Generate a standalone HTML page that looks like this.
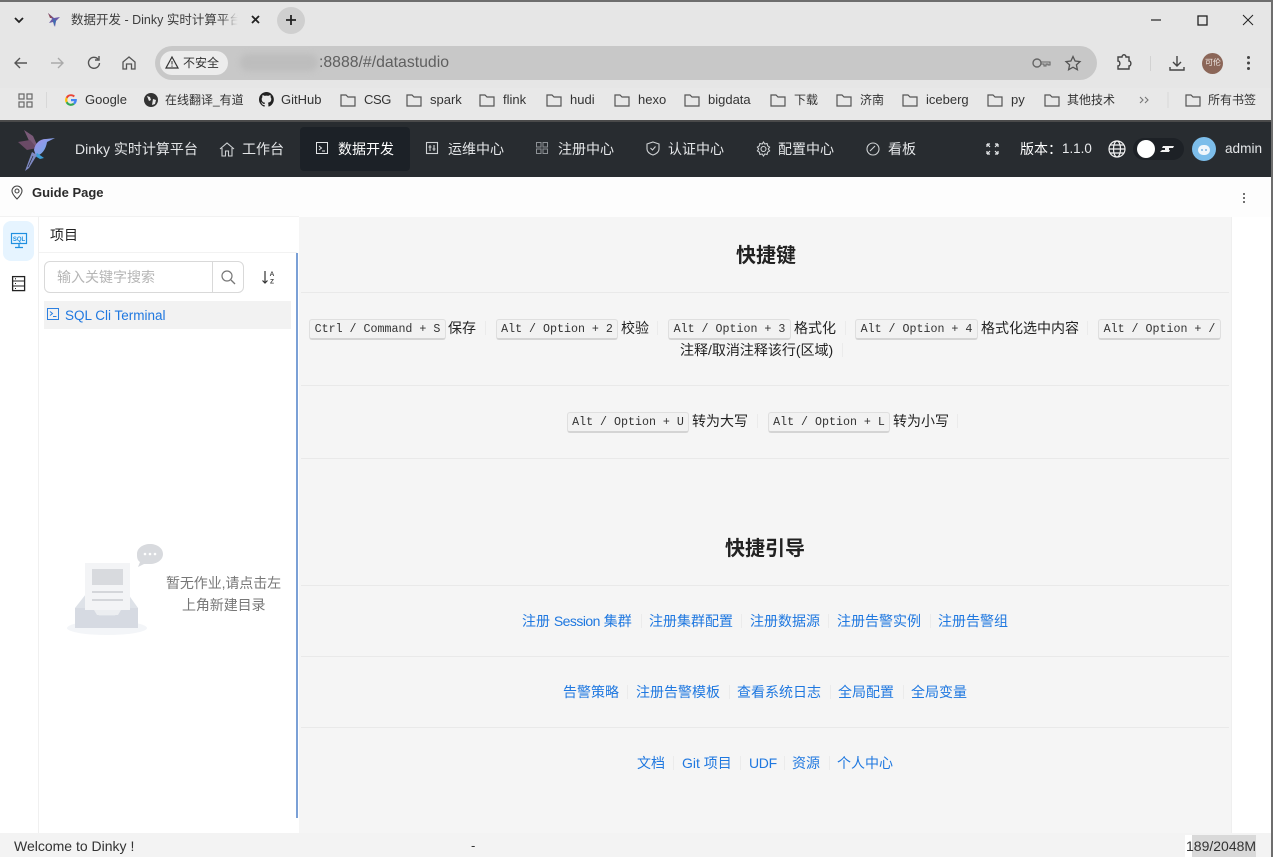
<!DOCTYPE html>
<html><head><meta charset="utf-8"><style>
html,body{margin:0;padding:0;width:1273px;height:857px;overflow:hidden;background:#fff;font-family:"Liberation Sans","Noto Sans CJK SC",sans-serif}
.a{position:absolute}
.t{position:absolute;white-space:nowrap;line-height:20px;height:20px;font-size:13px;color:#333}
.n{font-size:14px;color:#e4e6e8}
.l{font-size:14px;color:#1f78e0}
.k{position:absolute;height:18px;background:#f2f2f2;border:1px solid #dfdfdf;border-bottom:2px solid #d4d4d4;border-radius:3px;font:11.65px/20px "Liberation Mono",monospace;color:#333;text-align:center;white-space:nowrap;box-sizing:content-box;overflow:hidden}
.z{font-size:14px;color:#222}
.d{position:absolute;height:1px;background:#e9e9e9;left:301px;width:928px}
.s{position:absolute;width:1px;height:14px;background:#ebebeb}
svg{position:absolute;overflow:visible}
.f{fill:none;stroke:#555;stroke-width:1.2}
.w{fill:none;stroke:#cfd2d4;stroke-width:1.1}
</style></head><body>
<!-- chrome -->
<div class="a" style="left:0;top:0;width:1273px;height:121px;background:#e6e6e6"></div>
<div class="a" style="left:0;top:0;width:1273px;height:2px;background:#6e6e6e"></div>
<div class="a" style="left:0;top:88px;width:1273px;height:33px;background:#e8e8e8"></div>
<svg style="left:14px;top:17px" width="10" height="7"><path d="M1 1l4 4 4-4" fill="none" stroke="#222" stroke-width="1.8"/></svg>
<svg style="left:46px;top:12px" width="16" height="16"><path d="M2 1l6 5 6-1-4 4-1 6-2-5-4 1 3-4z" fill="#6a5aa8"/><path d="M7 6l3 3-2 5z" fill="#3a6fb0"/><path d="M2 1l5 5-3 0z" fill="#8a4a5a"/></svg>
<span class="t" style="left:71px;top:10px;font-size:12.5px;color:#3c3c3c;width:167px;overflow:hidden;-webkit-mask-image:linear-gradient(90deg,#000 150px,transparent 167px)">数据开发 - Dinky 实时计算平台</span>
<svg style="left:251px;top:15px" width="10" height="10"><path d="M1 1l7 7M8 1L1 8" stroke="#222" stroke-width="1.8"/></svg>
<div class="a" style="left:277px;top:7px;width:28px;height:27px;border-radius:50%;background:#cfcfcf"></div>
<svg style="left:285px;top:14px" width="12" height="12"><path d="M6 1v10M1 6h10" stroke="#222" stroke-width="1.8"/></svg>
<svg style="left:1151px;top:15px" width="106" height="12"><path d="M0 5h10" stroke="#222" stroke-width="1.2"/><rect x="47" y="1" width="9" height="9" fill="none" stroke="#222" stroke-width="1.3"/><path d="M92 0l10 10M102 0L92 10" stroke="#222" stroke-width="1"/></svg>
<!-- nav buttons -->
<svg style="left:14px;top:55px" width="125" height="16"><path d="M1 8h12M6 3L1 8l5 5" fill="none" stroke="#555" stroke-width="1.4"/><path d="M37 8h12M44 3l5 5-5 5" fill="none" stroke="#aaa" stroke-width="1.4"/><path d="M84 4a5.5 5.5 0 1 0 1.5 4M85 1v4h-4" fill="none" stroke="#555" stroke-width="1.4"/><path d="M109 7l6-5 6 5v7h-3.500v-5h-5v5H109z" fill="none" stroke="#555" stroke-width="1.3"/></svg>
<div class="a" style="left:155px;top:46px;width:942px;height:34px;border-radius:17px;background:#c8c8c8"></div>
<div class="a" style="left:160px;top:51px;width:68px;height:24px;border-radius:12px;background:#ececec"></div>
<svg style="left:165px;top:56px" width="14" height="13"><path d="M7 1l6 11H1z" fill="none" stroke="#333" stroke-width="1.2"/><path d="M7 5v3.500M7 9.500v1.200" stroke="#333"/></svg>
<span class="t" style="left:183px;top:53px;font-size:12px;color:#333">不安全</span>
<div class="a" style="left:240px;top:54px;width:78px;height:17px;border-radius:8px;background:#bdbdbd;filter:blur(3px)"></div>
<span class="t" style="left:319px;top:53px;font-size:15.8px;color:#5f5f5f">:8888/#/datastudio</span>
<svg style="left:1032px;top:55px" width="50" height="16"><circle cx="5" cy="8" r="4" fill="none" stroke="#666" stroke-width="1.400"/><path d="M9 7h9v3h-2v-1h-2v2h-2V9H9" fill="none" stroke="#666" stroke-width="1.100"/><path d="M41 1.500l2.100 4.500 4.900.600-3.600 3.300 1 4.800-4.400-2.500-4.400 2.500 1-4.800L34 6.600l4.900-.600z" fill="none" stroke="#555" stroke-width="1.300"/></svg>
<svg style="left:1115px;top:54px" width="18" height="17"><path d="M3 3h4c0-3 4-3 4 0h3v4c2.500 0 2.500 5 0 5v3H3v-3c2.500 0 2.500-5 0-5z" fill="none" stroke="#444" stroke-width="1.400"/></svg>
<div class="a" style="left:1150px;top:56px;width:1px;height:15px;background:#d2d2d2"></div>
<svg style="left:1168px;top:54px" width="18" height="18"><path d="M9 2v10M5 8l4 4 4-4M2 13v3h14v-3" fill="none" stroke="#444" stroke-width="1.400"/></svg>
<div class="a" style="left:1202px;top:53px;width:21px;height:21px;border-radius:50%;background:#8b6658"></div>
<span class="t" style="left:1205px;top:53px;font-size:8px;color:#f0e8e4">可伦</span>
<svg style="left:1246px;top:55px" width="5" height="16"><circle cx="2.500" cy="2.500" r="1.500" fill="#444"/><circle cx="2.500" cy="8" r="1.500" fill="#444"/><circle cx="2.500" cy="13.500" r="1.500" fill="#444"/></svg>
<!-- bookmarks -->
<svg style="left:18px;top:93px" width="15" height="15"><g fill="none" stroke="#666" stroke-width="1.200"><rect x="1" y="1" width="5" height="5"/><rect x="9" y="1" width="5" height="5"/><rect x="1" y="9" width="5" height="5"/><rect x="9" y="9" width="5" height="5"/></g></svg>
<div class="a" style="left:46px;top:92px;width:1px;height:16px;background:#d8d8d8"></div>
<svg style="left:64px;top:93px" width="14" height="14" viewBox="0 0 14 14"><path d="M7 1.200a5.800 5.800 0 0 1 4 1.500L9.500 4.200A3.500 3.500 0 0 0 3.600 5.500L1.800 4.200A5.800 5.800 0 0 1 7 1.200z" fill="#ea4335"/><path d="M1.800 4.200l1.800 1.300a3.700 3.700 0 0 0 0 3L1.800 9.800a6 6 0 0 1 0-5.600z" fill="#fbbc05"/><path d="M1.800 9.800l1.800-1.300A3.500 3.500 0 0 0 9 10l1.800 1.400A5.800 5.800 0 0 1 1.800 9.800z" fill="#34a853"/><path d="M12.800 6H7v2.300h3.300A2.800 2.800 0 0 1 9 10l1.800 1.400c1.400-1.200 2.300-3.100 2-5.400z" fill="#4285f4"/></svg>
<span class="t" style="left:85px;top:90px">Google</span>
<svg style="left:144px;top:93px" width="14" height="14"><circle cx="7" cy="7" r="7" fill="#333"/><path d="M3 3l3 1 1 3-2 1zM9 6l3 1-1 4-3 1z" fill="#e8e8e8"/></svg>
<span class="t" style="left:165px;top:90px;font-size:12px">在线翻译_有道</span>
<svg style="left:259px;top:92px" width="15" height="15" viewBox="0 0 16 16"><path fill="#222" d="M8 0a8 8 0 0 0-2.500 15.600c.4.100.5-.2.500-.4v-1.400c-2.200.5-2.700-1-2.700-1-.4-.9-.9-1.200-.9-1.200-.7-.5.100-.5.100-.5.800.100 1.200.8 1.200.8.700 1.200 1.900.9 2.300.7.100-.5.300-.9.500-1.100-1.800-.2-3.600-.9-3.600-4 0-.9.300-1.600.8-2.100-.1-.2-.4-1 .100-2.100 0 0 .7-.2 2.200.8a7.500 7.500 0 0 1 4 0c1.500-1 2.200-.8 2.200-.8.400 1.100.2 1.900.1 2.100.5.600.8 1.300.8 2.100 0 3.100-1.900 3.700-3.700 3.900.3.300.6.800.6 1.500v2.200c0 .2.100.5.600.4A8 8 0 0 0 8 0z"/></svg>
<span class="t" style="left:281px;top:90px">GitHub</span>
<svg style="left:0;top:0" width="1273" height="121"><g class="f"><path d="M341 95h5l2 2h7v9h-14z"/><path d="M407 95h5l2 2h7v9h-14z"/><path d="M480 95h5l2 2h7v9h-14z"/><path d="M547 95h5l2 2h7v9h-14z"/><path d="M615 95h5l2 2h7v9h-14z"/><path d="M685 95h5l2 2h7v9h-14z"/><path d="M771 95h5l2 2h7v9h-14z"/><path d="M837 95h5l2 2h7v9h-14z"/><path d="M903 95h5l2 2h7v9h-14z"/><path d="M988 95h5l2 2h7v9h-14z"/><path d="M1045 95h5l2 2h7v9h-14z"/><path d="M1186 95h5l2 2h7v9h-14z"/></g><path d="M1140 97l3 3-3 3M1145 97l3 3-3 3" fill="none" stroke="#777" stroke-width="1.100"/><path d="M1168 92v16" stroke="#d8d8d8"/></svg>
<span class="t" style="left:364px;top:90px;letter-spacing:-.4px">CSG</span>
<span class="t" style="left:430px;top:90px">spark</span>
<span class="t" style="left:503px;top:90px">flink</span>
<span class="t" style="left:570px;top:90px">hudi</span>
<span class="t" style="left:638px;top:90px">hexo</span>
<span class="t" style="left:708px;top:90px">bigdata</span>
<span class="t" style="left:794px;top:90px;font-size:12px">下载</span>
<span class="t" style="left:860px;top:90px;font-size:12px">济南</span>
<span class="t" style="left:926px;top:90px">iceberg</span>
<span class="t" style="left:1011px;top:90px">py</span>
<span class="t" style="left:1067px;top:90px;font-size:12px">其他技术</span>
<span class="t" style="left:1208px;top:90px;font-size:12px">所有书签</span>
<!-- dark nav -->
<div class="a" style="left:0;top:121px;width:1273px;height:56px;background:#282c30"></div>
<div class="a" style="left:0;top:120px;width:1273px;height:2px;background:#4a4a4a"></div>
<div class="a" style="left:300px;top:127px;width:110px;height:44px;border-radius:4px;background:#1c2127"></div>
<svg style="left:0;top:125px" width="60" height="50">
<defs><linearGradient id="hb" x1="0" y1="0" x2="1" y2="1"><stop offset="0" stop-color="#a78fe8"/><stop offset="1" stop-color="#5fb0e8"/></linearGradient></defs>
<path d="M24 5L33 11L38 22L31 20Z" fill="#7a5a78"/><path d="M18 17L30 15L37 23L27 25Z" fill="#6a4a66"/>
<path d="M34 25C35 18 40 14 46 14L55 13L47 17C46 24 42 30 36 31Z" fill="url(#hb)"/>
<path d="M37 28L44 33L40 34L35 31Z" fill="#3d9fd8"/>
<path d="M32 27L37 30L29 43L25 46Z" fill="#7f8ac4"/><path d="M33 31L28 42" stroke="#282c30" stroke-width=".7"/>
</svg>
<span class="t n" style="left:75px;top:139px;font-size:14px">Dinky 实时计算平台</span>
<svg style="left:219px;top:141px" width="16" height="16"><path d="M1 8l7-6 7 6M3 7v8h3.500v-5h3v5H13V7" class="w"/></svg>
<span class="t n" style="left:242px;top:139px">工作台</span>
<svg style="left:316px;top:142px" width="13" height="13"><rect x=".5" y=".5" width="11" height="11" fill="none" stroke="#e2e4e6" stroke-width="1"/><path d="M3 4l2.500 2L3 8M6 9h3" fill="none" stroke="#e2e4e6"/></svg>
<span class="t n" style="left:338px;top:139px;color:#fff">数据开发</span>
<svg style="left:426px;top:142px" width="13" height="13"><rect x=".5" y=".5" width="11" height="11" class="w"/><path d="M4 3v6M8 3v6M2.500 5h3M6.500 7h3" class="w"/></svg>
<span class="t n" style="left:448px;top:139px">运维中心</span>
<svg style="left:536px;top:142px" width="13" height="13"><g fill="none" stroke="#8e9296"><rect x=".5" y=".5" width="4.500" height="4.500"/><rect x="7" y=".5" width="4.500" height="4.500"/><rect x=".5" y="7" width="4.500" height="4.500"/><rect x="7" y="7" width="4.500" height="4.500"/></g></svg>
<span class="t n" style="left:558px;top:139px">注册中心</span>
<svg style="left:646px;top:141px" width="14" height="15"><path d="M7 1l6 2v5c0 3-3 5-6 6-3-1-6-3-6-6V3z" class="w"/><path d="M4.500 7l2 2 3-3.500" class="w"/></svg>
<span class="t n" style="left:668px;top:139px">认证中心</span>
<svg style="left:756px;top:141px" width="15" height="15"><path d="M7.500 1l1.300 2 2.300-.500.500 2.300 2 1.300-1.300 1.900 1.300 1.900-2 1.300-.500 2.300-2.300-.500-1.300 2-1.300-2-2.300.500-.500-2.300-2-1.300 1.300-1.900L1.400 6.100l2-1.300.500-2.300 2.300.500z" class="w"/><circle cx="7.500" cy="8" r="2.500" class="w"/></svg>
<span class="t n" style="left:778px;top:139px">配置中心</span>
<svg style="left:866px;top:142px" width="14" height="14"><circle cx="7" cy="7" r="6" class="w"/><path d="M4 9l5-5" class="w"/></svg>
<span class="t n" style="left:888px;top:139px">看板</span>
<svg style="left:986px;top:143px" width="13" height="12"><path d="M1 1l3 3M1 1h3M1 1v3M12 1L9 4M12 1H9M12 1v3M1 11l3-3M1 11h3M1 11V8M12 11L9 8M12 11H9M12 11V8" fill="none" stroke="#e8eaec" stroke-width="1.200"/></svg>
<span class="t n" style="left:1020px;top:139px;color:#fff">版本：</span><span class="t n" style="left:1062px;top:139px;color:#e8eaec;font-size:13.4px">1.1.0</span>
<svg style="left:1108px;top:140px" width="18" height="18"><g fill="none" stroke="#f2f2f2" stroke-width="1.200"><circle cx="9" cy="9" r="8"/><ellipse cx="9" cy="9" rx="3.500" ry="8"/><path d="M1 9h16M2 5h14M2 13h14"/></g></svg>
<div class="a" style="left:1133px;top:138px;width:51px;height:22px;border-radius:11px;background:#1d2126"></div>
<div class="a" style="left:1137px;top:140px;width:18px;height:18px;border-radius:50%;background:#fff"></div>
<svg style="left:1160px;top:145px" width="16" height="9"><path d="M3 1h11l-1 2H2zM2 5h8l-1 2H0zM5 3h4v2H5z" fill="#f2f2f2"/></svg>
<div class="a" style="left:1192px;top:137px;width:24px;height:24px;border-radius:50%;background:#7cbdea"></div>
<svg style="left:1197px;top:144px" width="14" height="12"><rect x="1" y="1" width="12" height="10" rx="5" fill="#f0f6fb"/><circle cx="5" cy="6" r=".9" fill="#5a9fd8"/><circle cx="9" cy="6" r=".9" fill="#5a9fd8"/></svg>
<span class="t n" style="left:1225px;top:139px;font-size:13.6px">admin</span>
<!-- guide bar -->
<div class="a" style="left:0;top:177px;width:1273px;height:40px;background:#fdfdfd"></div>
<svg style="left:11px;top:185px" width="12" height="15"><path d="M6 1a5 5 0 0 1 5 5c0 3-3 6-5 8-2-2-5-5-5-8a5 5 0 0 1 5-5z" fill="none" stroke="#444" stroke-width="1.100"/><circle cx="6" cy="6" r="2" fill="none" stroke="#444" stroke-width="1.100"/></svg>
<span class="t" style="left:32px;top:183px;font-size:13px;font-weight:bold;color:#2a2a2a">Guide Page</span>
<svg style="left:1242px;top:192px" width="4" height="12"><circle cx="2" cy="2" r="1" fill="#444"/><circle cx="2" cy="6" r="1" fill="#444"/><circle cx="2" cy="10" r="1" fill="#444"/></svg>
<!-- main -->
<div class="a" style="left:299px;top:217px;width:932px;height:616px;background:#f5f5f5"></div>
<div class="a" style="left:1231px;top:217px;width:40px;height:616px;background:#fff;border-left:1px solid #efefef;box-sizing:border-box"></div>
<div class="a" style="left:0;top:217px;width:299px;height:616px;background:#fff"></div>
<div class="a" style="left:0;top:216px;width:299px;height:1px;background:#f2f2f2"></div>
<div class="a" style="left:38px;top:217px;width:1px;height:616px;background:#f0f0f0"></div>
<div class="a" style="left:39px;top:252px;width:258px;height:1px;background:#f2f2f2"></div>
<div class="a" style="left:296px;top:253px;width:2px;height:565px;background:#7ba0d6"></div>
<div class="a" style="left:3px;top:221px;width:31px;height:40px;border-radius:8px;background:#e6f4ff"></div>
<svg style="left:11px;top:233px" width="17" height="16"><rect x=".5" y=".5" width="15" height="10" fill="none" stroke="#1f8fe0" stroke-width="1.200"/><path d="M8 11v3M4 14.500h8" stroke="#1f8fe0" stroke-width="1.300"/><text x="8" y="8" font-size="6" font-weight="bold" text-anchor="middle" fill="#1f8fe0" font-family="Liberation Sans">SQL</text></svg>
<svg style="left:12px;top:276px" width="14" height="16"><rect x=".6" y=".6" width="12" height="14" fill="none" stroke="#222" stroke-width="1.300"/><path d="M1 5h12M1 10h12M3 2.800h1M3 7.500h1M3 12.500h1" stroke="#222" stroke-width="1.100"/></svg>
<span class="t" style="left:50px;top:225px;font-size:14px;color:#222">项目</span>
<div class="a" style="left:44px;top:261px;width:200px;height:32px;box-sizing:border-box;border:1px solid #d9d9d9;border-radius:6px;background:#fff"></div>
<div class="a" style="left:212px;top:262px;width:1px;height:30px;background:#d9d9d9"></div>
<span class="t" style="left:57px;top:267px;font-size:14px;color:#b5b5b5">输入关键字搜索</span>
<svg style="left:221px;top:270px" width="15" height="15"><circle cx="6" cy="6" r="5" fill="none" stroke="#777" stroke-width="1.200"/><path d="M10 10l4 4" stroke="#777" stroke-width="1.300"/></svg>
<svg style="left:261px;top:270px" width="15" height="15"><path d="M4 1v12M1.500 10.500L4 13l2.500-2.500" fill="none" stroke="#333" stroke-width="1.200"/><text x="11" y="6" font-size="6.500" font-weight="bold" text-anchor="middle" fill="#444" font-family="Liberation Sans">A</text><text x="11" y="13.500" font-size="6.500" font-weight="bold" text-anchor="middle" fill="#444" font-family="Liberation Sans">Z</text></svg>
<div class="a" style="left:44px;top:301px;width:247px;height:28px;background:#f2f2f2"></div>
<svg style="left:47px;top:308px" width="13" height="13"><rect x=".5" y=".5" width="11" height="11" fill="none" stroke="#2c7fe0"/><path d="M3 3.500l2.500 2L3 7.500M6 8.500h3.500" fill="none" stroke="#2c7fe0"/></svg>
<span class="t" style="left:65px;top:306px;font-size:13.5px;color:#1f78e0">SQL Cli Terminal</span>
<!-- empty -->
<svg style="left:64px;top:542px" width="100" height="96" viewBox="0 0 100 96"><ellipse cx="43" cy="86" rx="40" ry="7" fill="#f3f5f8"/><path d="M11 66l11-14h42l10 14v20H11z" fill="#c8ced8" opacity=".6"/><path d="M11 66h19l5 8h16l5-8h18v20H11z" fill="#d6dae2"/><rect x="21" y="21" width="45" height="47" fill="#f3f4f6"/><path d="M30 68h27l-3 5H33z" fill="#eceef1"/><rect x="28" y="27" width="31" height="16" fill="#d8dade"/><rect x="28" y="49" width="31" height="2" fill="#d4d6da"/><rect x="28" y="57" width="31" height="2" fill="#d4d6da"/><path d="M86 2c7 0 13 4 13 10s-6 10-13 10c-2 0-4 0-6 0l-6 3 2-5c-3-2-3-5-3-8 0-6 6-10 13-10z" fill="#d8dade"/><circle cx="81" cy="12" r="1.300" fill="#fff"/><circle cx="86" cy="12" r="1.300" fill="#fff"/><circle cx="91" cy="12" r="1.300" fill="#fff"/></svg>
<span class="t" style="left:166px;top:573px;font-size:14px;letter-spacing:-.1px;color:#777">暂无作业,请点击左</span>
<span class="t" style="left:182px;top:595px;font-size:14px;letter-spacing:-.1px;color:#777">上角新建目录</span>
<!-- content -->
<span class="t" style="left:736px;top:244px;font-size:20px;font-weight:bold;color:#222;line-height:24px;height:24px">快捷键</span>
<div class="d" style="top:292px"></div>
<div class="k" style="left:309px;top:319px;width:135px">Ctrl / Command + S</div><span class="t z" style="left:448px;top:318px">保存</span><div class="s" style="left:485px;top:321px"></div>
<div class="k" style="left:496px;top:319px;width:120px">Alt / Option + 2</div><span class="t z" style="left:621px;top:318px">校验</span><div class="s" style="left:657px;top:321px"></div>
<div class="k" style="left:668px;top:319px;width:121px">Alt / Option + 3</div><span class="t z" style="left:794px;top:318px">格式化</span><div class="s" style="left:845px;top:321px"></div>
<div class="k" style="left:855px;top:319px;width:121px">Alt / Option + 4</div><span class="t z" style="left:981px;top:318px">格式化选中内容</span><div class="s" style="left:1087px;top:321px"></div>
<div class="k" style="left:1098px;top:319px;width:121px">Alt / Option + /</div>
<span class="t z" style="left:680px;top:340px">注释/取消注释该行(区域)</span><div class="s" style="left:842px;top:343px"></div>
<div class="d" style="top:385px"></div>
<div class="k" style="left:567px;top:412px;width:120px">Alt / Option + U</div><span class="t z" style="left:692px;top:411px">转为大写</span><div class="s" style="left:757px;top:414px"></div>
<div class="k" style="left:768px;top:412px;width:120px">Alt / Option + L</div><span class="t z" style="left:893px;top:411px">转为小写</span><div class="s" style="left:957px;top:414px"></div>
<div class="d" style="top:458px"></div>
<span class="t" style="left:725px;top:537px;font-size:20px;font-weight:bold;color:#222;line-height:24px;height:24px">快捷引导</span>
<div class="d" style="top:585px"></div>
<span class="t l" style="left:522px;top:611px">注册 <span style="letter-spacing:-.55px">Session</span> 集群</span><div class="s" style="left:641px;top:614px"></div>
<span class="t l" style="left:649px;top:611px">注册集群配置</span><div class="s" style="left:741px;top:614px"></div>
<span class="t l" style="left:750px;top:611px">注册数据源</span><div class="s" style="left:828px;top:614px"></div>
<span class="t l" style="left:837px;top:611px">注册告警实例</span><div class="s" style="left:930px;top:614px"></div>
<span class="t l" style="left:938px;top:611px">注册告警组</span>
<div class="d" style="top:656px"></div>
<span class="t l" style="left:563px;top:682px">告警策略</span><div class="s" style="left:627px;top:685px"></div>
<span class="t l" style="left:636px;top:682px">注册告警模板</span><div class="s" style="left:729px;top:685px"></div>
<span class="t l" style="left:737px;top:682px">查看系统日志</span><div class="s" style="left:830px;top:685px"></div>
<span class="t l" style="left:838px;top:682px">全局配置</span><div class="s" style="left:903px;top:685px"></div>
<span class="t l" style="left:911px;top:682px">全局变量</span>
<div class="d" style="top:727px"></div>
<span class="t l" style="left:637px;top:753px">文档</span><div class="s" style="left:673px;top:756px"></div>
<span class="t l" style="left:682px;top:753px">Git 项目</span><div class="s" style="left:740px;top:756px"></div>
<span class="t l" style="left:749px;top:753px;letter-spacing:-.3px">UDF</span><div class="s" style="left:784px;top:756px"></div>
<span class="t l" style="left:792px;top:753px">资源</span><div class="s" style="left:829px;top:756px"></div>
<span class="t l" style="left:837px;top:753px">个人中心</span>
<!-- status -->
<div class="a" style="left:0;top:833px;width:1273px;height:24px;background:#f3f3f3"></div>
<span class="t" style="left:14px;top:836px;font-size:14px;color:#333">Welcome to Dinky !</span>
<span class="t" style="left:471px;top:836px;font-size:13px;color:#333">-</span>
<div class="a" style="left:1185px;top:835px;width:7px;height:22px;background:#fff"></div>
<div class="a" style="left:1192px;top:835px;width:64px;height:22px;background:#d9d9d9"></div>
<span class="t" style="left:1186px;top:836px;font-size:14px;color:#333">189/2048M</span>
<div class="a" style="left:1271px;top:0;width:2px;height:857px;background:#6e6e6e"></div>
</body></html>
